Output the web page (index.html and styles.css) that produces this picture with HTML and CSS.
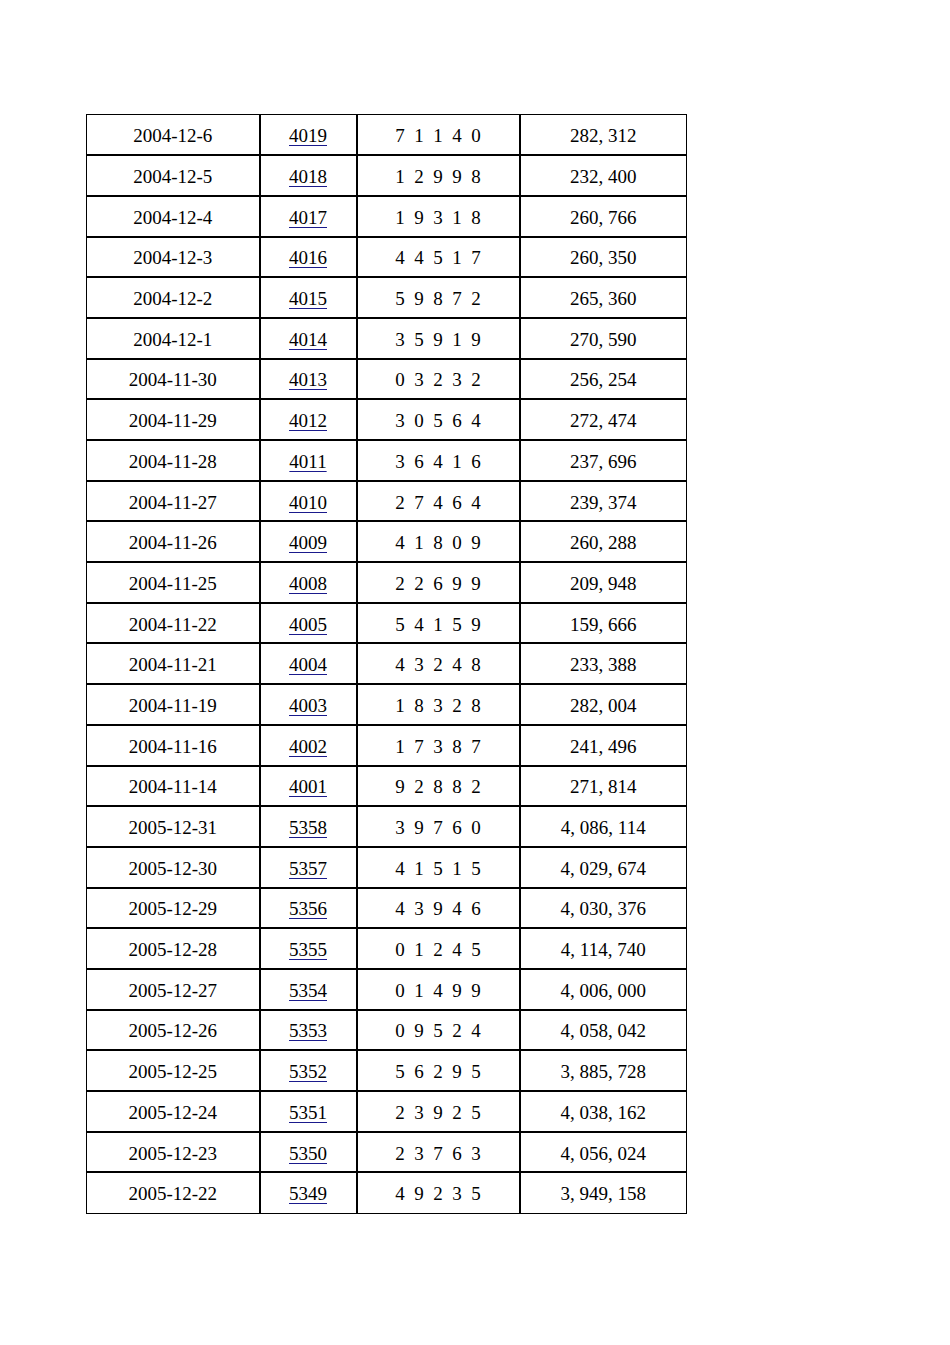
FILE: index.html
```html
<!DOCTYPE html>
<html>
<head>
<meta charset="utf-8">
<link rel="stylesheet" href="styles.css">
</head>
<body>
<div class="page">
<table class="sheet">
<colgroup><col class="c-date"><col class="c-no"><col class="c-num"><col class="c-sum"></colgroup>
<tbody>
<tr><td>2004-12-6</td><td><a href="#">4019</a></td><td class="digits">7 1 1 4 0</td><td>282, 312</td></tr>
<tr><td>2004-12-5</td><td><a href="#">4018</a></td><td class="digits">1 2 9 9 8</td><td>232, 400</td></tr>
<tr><td>2004-12-4</td><td><a href="#">4017</a></td><td class="digits">1 9 3 1 8</td><td>260, 766</td></tr>
<tr><td>2004-12-3</td><td><a href="#">4016</a></td><td class="digits">4 4 5 1 7</td><td>260, 350</td></tr>
<tr><td>2004-12-2</td><td><a href="#">4015</a></td><td class="digits">5 9 8 7 2</td><td>265, 360</td></tr>
<tr><td>2004-12-1</td><td><a href="#">4014</a></td><td class="digits">3 5 9 1 9</td><td>270, 590</td></tr>
<tr><td>2004-11-30</td><td><a href="#">4013</a></td><td class="digits">0 3 2 3 2</td><td>256, 254</td></tr>
<tr><td>2004-11-29</td><td><a href="#">4012</a></td><td class="digits">3 0 5 6 4</td><td>272, 474</td></tr>
<tr><td>2004-11-28</td><td><a href="#">4011</a></td><td class="digits">3 6 4 1 6</td><td>237, 696</td></tr>
<tr><td>2004-11-27</td><td><a href="#">4010</a></td><td class="digits">2 7 4 6 4</td><td>239, 374</td></tr>
<tr><td>2004-11-26</td><td><a href="#">4009</a></td><td class="digits">4 1 8 0 9</td><td>260, 288</td></tr>
<tr><td>2004-11-25</td><td><a href="#">4008</a></td><td class="digits">2 2 6 9 9</td><td>209, 948</td></tr>
<tr><td>2004-11-22</td><td><a href="#">4005</a></td><td class="digits">5 4 1 5 9</td><td>159, 666</td></tr>
<tr><td>2004-11-21</td><td><a href="#">4004</a></td><td class="digits">4 3 2 4 8</td><td>233, 388</td></tr>
<tr><td>2004-11-19</td><td><a href="#">4003</a></td><td class="digits">1 8 3 2 8</td><td>282, 004</td></tr>
<tr><td>2004-11-16</td><td><a href="#">4002</a></td><td class="digits">1 7 3 8 7</td><td>241, 496</td></tr>
<tr><td>2004-11-14</td><td><a href="#">4001</a></td><td class="digits">9 2 8 8 2</td><td>271, 814</td></tr>
<tr><td>2005-12-31</td><td><a href="#">5358</a></td><td class="digits">3 9 7 6 0</td><td>4, 086, 114</td></tr>
<tr><td>2005-12-30</td><td><a href="#">5357</a></td><td class="digits">4 1 5 1 5</td><td>4, 029, 674</td></tr>
<tr><td>2005-12-29</td><td><a href="#">5356</a></td><td class="digits">4 3 9 4 6</td><td>4, 030, 376</td></tr>
<tr><td>2005-12-28</td><td><a href="#">5355</a></td><td class="digits">0 1 2 4 5</td><td>4, 114, 740</td></tr>
<tr><td>2005-12-27</td><td><a href="#">5354</a></td><td class="digits">0 1 4 9 9</td><td>4, 006, 000</td></tr>
<tr><td>2005-12-26</td><td><a href="#">5353</a></td><td class="digits">0 9 5 2 4</td><td>4, 058, 042</td></tr>
<tr><td>2005-12-25</td><td><a href="#">5352</a></td><td class="digits">5 6 2 9 5</td><td>3, 885, 728</td></tr>
<tr><td>2005-12-24</td><td><a href="#">5351</a></td><td class="digits">2 3 9 2 5</td><td>4, 038, 162</td></tr>
<tr><td>2005-12-23</td><td><a href="#">5350</a></td><td class="digits">2 3 7 6 3</td><td>4, 056, 024</td></tr>
<tr><td>2005-12-22</td><td><a href="#">5349</a></td><td class="digits">4 9 2 3 5</td><td>3, 949, 158</td></tr>
</tbody>
</table>
</div>
</body>
</html>
```
FILE: styles.css
```css
html, body {
  margin: 0;
  padding: 0;
  background: #fff;
}

.page {
  padding: 114px 0 0 86px;
}

.sheet {
  border-collapse: collapse;
  table-layout: fixed;
  width: 600px;
  font-family: "Liberation Serif", "DejaVu Serif", serif;
  font-size: 19px;
  color: #000;
}

.c-date { width: 173px; }
.c-no { width: 97px; }
.c-num { width: 163px; }
.c-sum { width: 167px; }

.sheet td {
  height: 40.7px;
  padding: 2px 0 0 0;
  text-align: center;
  vertical-align: middle;
  border: 2px solid #000;
  line-height: 1;
  box-sizing: border-box;
}

.sheet tr:first-child td { border-top-width: 1px; }
.sheet tr:last-child td { border-bottom-width: 1px; }
.sheet td:first-child { border-left-width: 1px; }
.sheet td:last-child { border-right-width: 1px; }

.sheet td.digits {
  word-spacing: 0.25em;
}

.sheet a {
  color: #000;
  text-decoration: underline;
  text-decoration-color: #1a1a8c;
  text-underline-offset: 3px;
  text-decoration-thickness: 1px;
}
```
